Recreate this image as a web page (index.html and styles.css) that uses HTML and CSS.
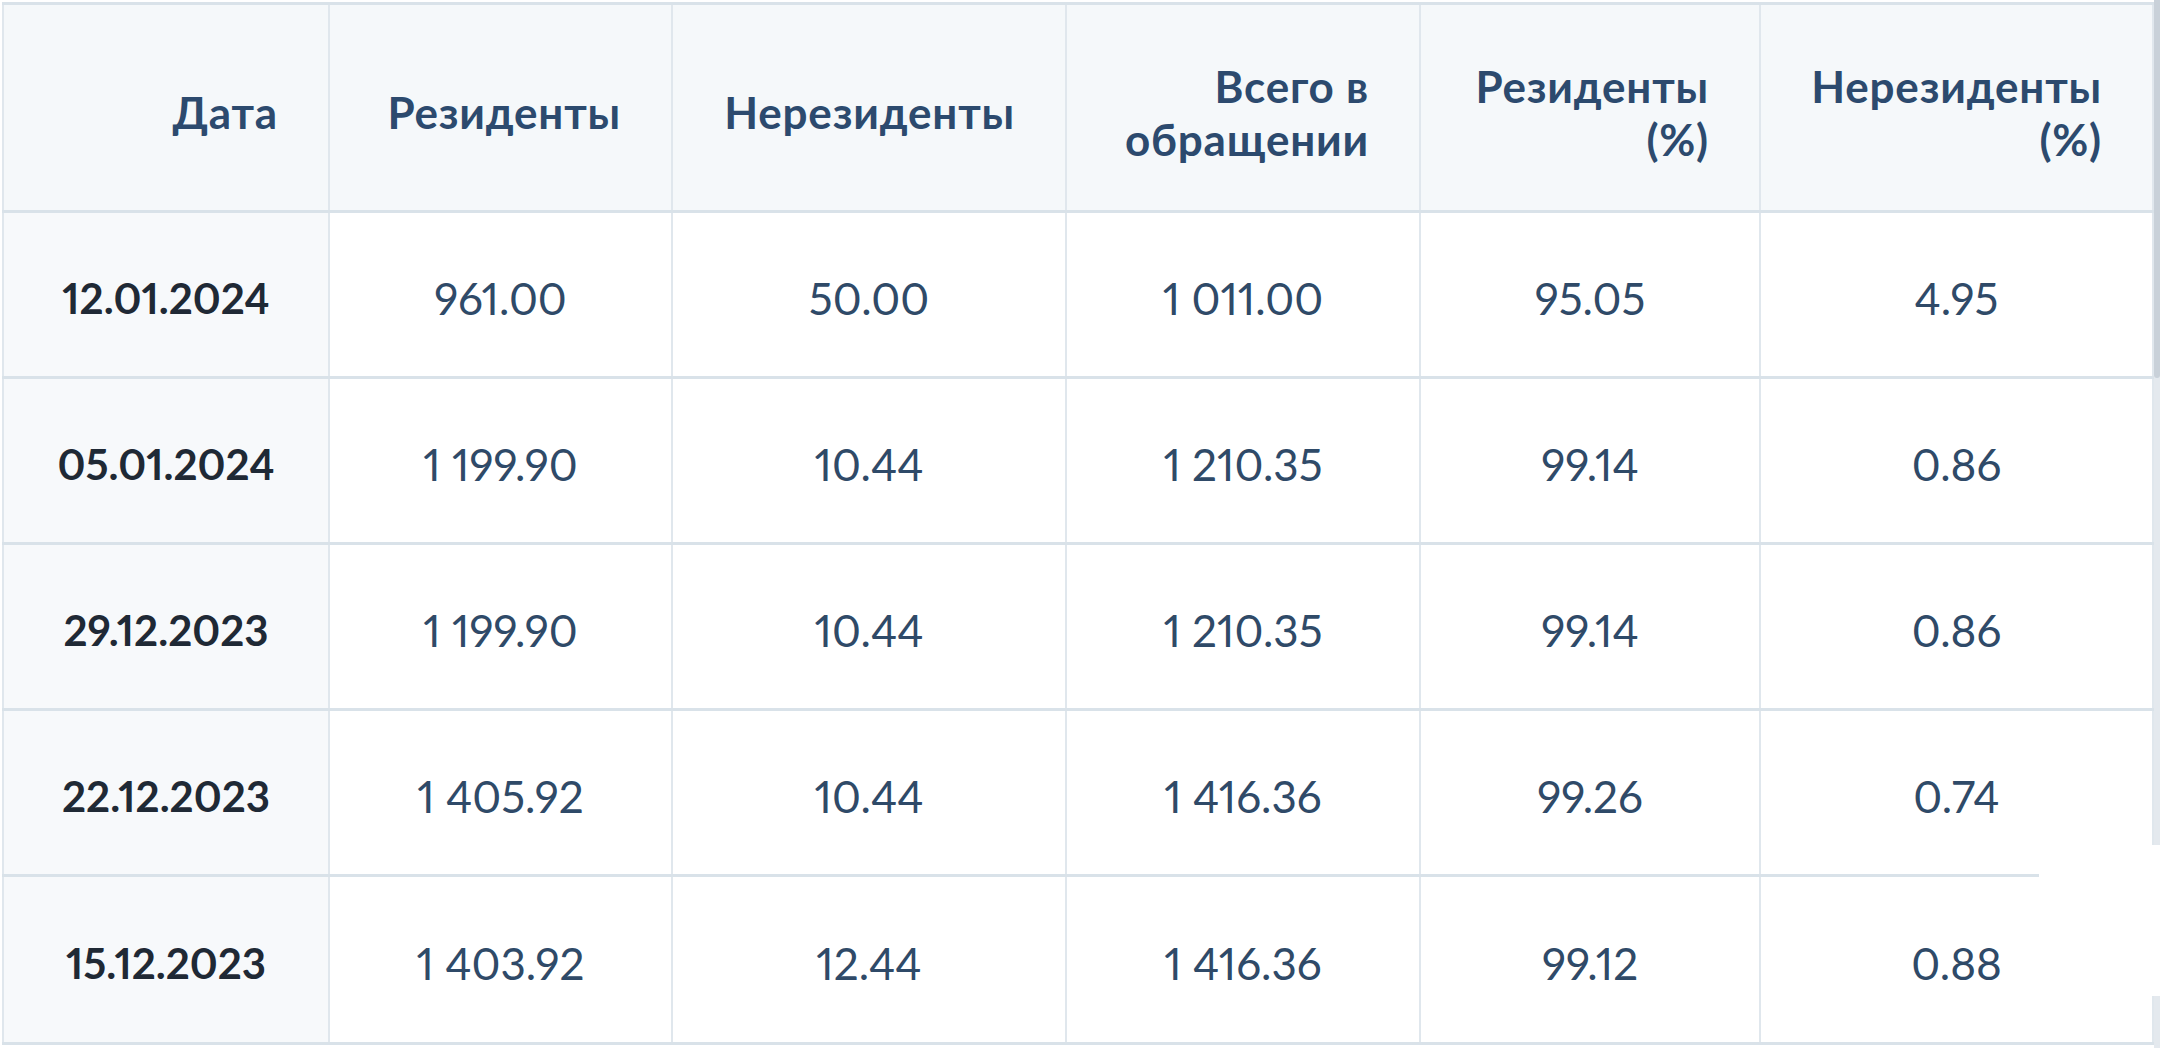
FILE: index.html
```html
<!DOCTYPE html>
<html lang="ru">
<head>
<meta charset="utf-8">
<title>Объём в обращении</title>
<link rel="stylesheet" href="styles.css">
</head>
<body>
<div class="page">
  <div class="table-box">
    <table class="data">
      <colgroup>
        <col class="c1"><col class="c2"><col class="c3"><col class="c4"><col class="c5"><col class="c6">
      </colgroup>
      <thead>
        <tr>
          <th>Дата</th>
          <th>Резиденты</th>
          <th>Нерезиденты</th>
          <th>Всего в<br>обращении</th>
          <th>Резиденты<br>(%)</th>
          <th>Нерезиденты<br>(%)</th>
        </tr>
      </thead>
      <tbody>
        <tr><td class="date">12.01.2024</td><td>961.00</td><td>50.00</td><td>1 011.00</td><td>95.05</td><td>4.95</td></tr>
        <tr><td class="date">05.01.2024</td><td>1 199.90</td><td>10.44</td><td>1 210.35</td><td>99.14</td><td>0.86</td></tr>
        <tr><td class="date">29.12.2023</td><td>1 199.90</td><td>10.44</td><td>1 210.35</td><td>99.14</td><td>0.86</td></tr>
        <tr><td class="date">22.12.2023</td><td>1 405.92</td><td>10.44</td><td>1 416.36</td><td>99.26</td><td>0.74</td></tr>
        <tr><td class="date">15.12.2023</td><td>1 403.92</td><td>12.44</td><td>1 416.36</td><td>99.12</td><td>0.88</td></tr>
      </tbody>
    </table>
  </div>
  <div class="scrollbar">
    <div class="thumb"></div>
  </div>
  <div class="overlay"></div>
</div>
</body>
</html>
```

FILE: styles.css
```css
html, body {
  margin: 0;
  padding: 0;
  background: #ffffff;
}

.page {
  position: relative;
  display: flex;
  width: 2160px;
  height: 1048px;
  overflow: hidden;
  font-family: "Lato", "Noto Sans", sans-serif;
}

.table-box {
  flex: 1;
  padding: 2px 0 0 2px;
}

.data {
  border-collapse: collapse;
  table-layout: fixed;
  width: 2150px;
  font-variant-numeric: proportional-nums;
}

.c1 { width: 326px; }
.c2 { width: 343px; }
.c3 { width: 394px; }
.c4 { width: 354px; }
.c5 { width: 340px; }
.c6 { width: 393px; }

.data th,
.data td {
  border-left: 2px solid #e0e7ed;
  border-right: 2px solid #e0e7ed;
  border-top: 3px solid #d9e2e9;
  border-bottom: 3px solid #d9e2e9;
  padding: 0;
}

.data thead tr {
  height: 208px;
}

.data th {
  background: #f5f8fa;
  color: #2c4a6e;
  font-size: 44px;
  font-weight: 700;
  letter-spacing: 0.8px;
  line-height: 53px;
  text-align: right;
  vertical-align: middle;
  padding: 10px 50px 0 10px;
}

.data tbody tr {
  height: 166px;
}

.data tbody tr:last-child {
  height: 168px;
}

.data td {
  background: #ffffff;
  color: #2f4a68;
  font-size: 44px;
  font-weight: 400;
  text-align: center;
  vertical-align: middle;
  padding-top: 6px;
}

.data td.date {
  background: #f7f9fb;
  color: #1f2935;
  font-weight: 700;
  font-size: 42px;
}

.scrollbar {
  width: 8px;
  height: 1048px;
  background: #e4e9ee;
  display: flex;
  flex-direction: column;
}

.thumb {
  height: 378px;
  background: #c9d1d9;
  border-radius: 0 0 4px 4px;
}

.overlay {
  position: absolute;
  left: 2039px;
  top: 845px;
  width: 121px;
  height: 151px;
  background: #ffffff;
}
```
